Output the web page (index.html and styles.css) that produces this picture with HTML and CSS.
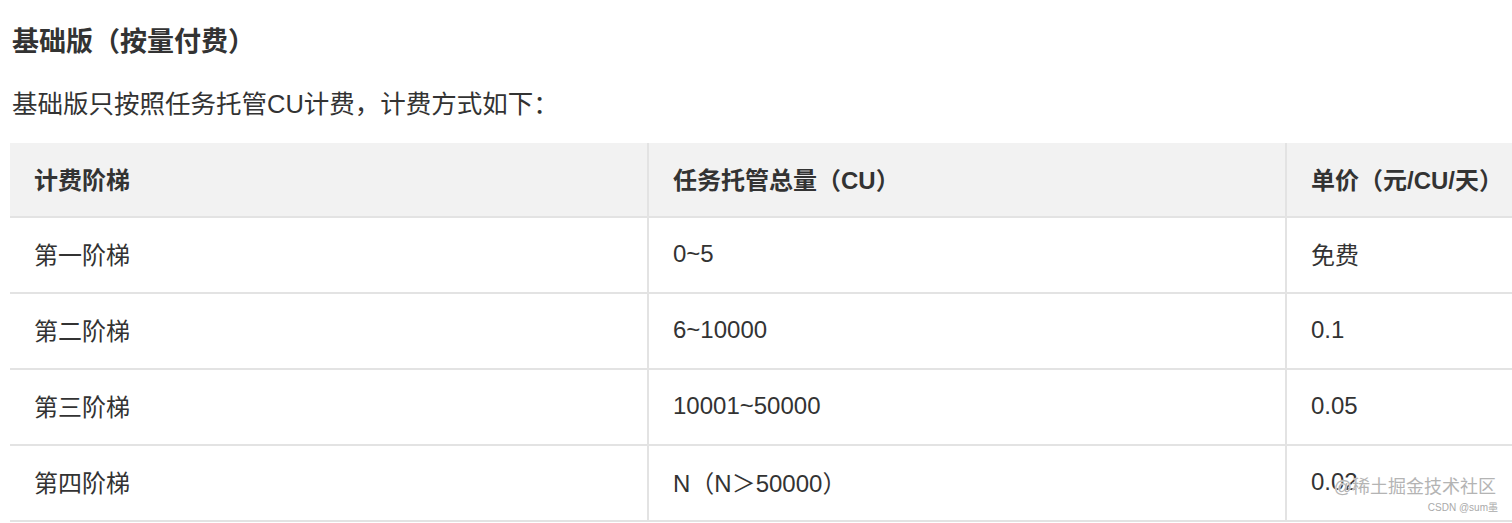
FILE: index.html
```html
<!DOCTYPE html>
<html lang="zh-CN">
<head>
<meta charset="utf-8">
<title>基础版（按量付费）</title>
<link rel="stylesheet" href="styles.css">
</head>
<body>
<div class="page">
  <h4 class="title">基础版（按量付费）</h4>
  <p class="intro">基础版只按照任务托管CU计费，计费方式如下：</p>
  <div class="table-wrap">
    <table class="price">
      <colgroup><col class="c"><col class="c"><col class="c"></colgroup>
      <thead>
        <tr><th>计费阶梯</th><th>任务托管总量（CU）</th><th>单价（元/CU/天）</th></tr>
      </thead>
      <tbody>
        <tr><td>第一阶梯</td><td>0~5</td><td>免费</td></tr>
        <tr><td>第二阶梯</td><td>6~10000</td><td>0.1</td></tr>
        <tr><td>第三阶梯</td><td>10001~50000</td><td>0.05</td></tr>
        <tr><td>第四阶梯</td><td>N（N＞50000）</td><td>0.02</td></tr>
      </tbody>
    </table>
  </div>
  <div class="wm">
    <span class="wm-main">@稀土掘金技术社区</span>
    <span class="wm-sub">CSDN @sum墨</span>
  </div>
</div>
</body>
</html>
```
FILE: styles.css
```css
html, body {
  margin: 0;
  padding: 0;
  background: #fff;
  overflow: hidden;
}
.page {
  position: relative;
  width: 1512px;
  height: 523px;
  overflow: hidden;
  font-family: "Liberation Sans", "Noto Sans CJK SC", sans-serif;
  color: #333;
}
.title {
  margin: 0;
  padding: 26px 0 0 12px;
  font-size: 27px;
  line-height: 32px;
  font-weight: 700;
  color: #333;
}
.intro {
  margin: 0;
  padding: 31px 0 0 12px;
  font-size: 25.5px;
  line-height: 30px;
  color: #333;
}
.table-wrap {
  padding: 24px 0 0 10px;
}
.price {
  border-collapse: collapse;
  table-layout: fixed;
  width: 1914px;
  font-size: 24px;
}
.price .c {
  width: 638px;
}
.price th,
.price td {
  text-align: left;
  padding: 0 24px 3px;
  border-bottom: 2px solid #e3e3e3;
  vertical-align: middle;
  color: #333;
}
.price th + th,
.price td + td {
  border-left: 2px solid #e3e3e3;
}
.price th {
  height: 70px;
  background: #f2f2f2;
  font-weight: 700;
}
.price td {
  height: 71px;
  font-weight: 400;
}
.wm {
  position: absolute;
  right: 16px;
  bottom: 9px;
  display: flex;
  flex-direction: column;
  align-items: flex-end;
}
.wm-main {
  font-size: 18px;
  line-height: 22px;
  color: #b4b4b4;
  text-shadow: 0 0 1px #fff, 0 0 1px #fff;
}
.wm-sub {
  font-size: 10px;
  line-height: 13px;
  color: #aaa;
  margin-top: 3px;
  margin-right: -2px;
}
```
